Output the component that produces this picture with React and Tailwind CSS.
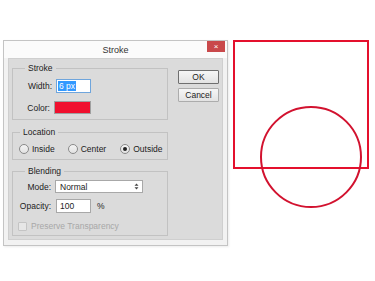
import React from "react";

function Radio({ label, checked, className = "" }) {
  return (
    <div className={`flex items-center gap-[3px] ${className}`}>
      <div className="w-[10px] h-[10px] rounded-full border border-[#8a8a8a] bg-gradient-to-b from-[#f4f4f4] to-[#e2e2e2] flex items-center justify-center">
        {checked && <div className="w-[4px] h-[4px] rounded-full bg-[#222]" />}
      </div>
      <span>{label}</span>
    </div>
  );
}

function Button({ children, primary }) {
  return (
    <button
      className={`w-[41px] h-[14px] text-[8.5px] leading-none rounded-[1px] border bg-gradient-to-b from-[#f6f6f6] to-[#e3e3e3] ${
        primary ? "border-[#6f6f6f]" : "border-[#acacac]"
      }`}
    >
      {children}
    </button>
  );
}

export default function App() {
  return (
    <div className="w-[375px] h-[281px] bg-white flex items-start pt-[40px] pl-[3px] font-['Liberation_Sans',Arial,sans-serif] text-[8.5px] leading-[10px] text-[#1c1c1c]">
      {/* Dialog */}
      <div className="w-[225px] h-[206px] border border-[#c4c4c4] bg-[#f2f2f2] flex flex-col shadow-[1px_1px_2px_rgba(0,0,0,0.08)]">
        {/* Title bar */}
        <div className="relative h-[17px] bg-[#fbfbfb] flex items-center justify-center">
          <span className="text-[9px] text-[#333]">Stroke</span>
          <div className="absolute right-[2px] top-0 w-[18px] h-[11px] bg-[#c9494b] flex items-center justify-center text-white text-[8px] leading-none">
            ×
          </div>
        </div>

        {/* Body */}
        <div className="flex-1 mx-[4px] mb-[5px] bg-[#dbdbdb] border border-[#cfcfcf] flex pl-[3px] pt-[3px]">
          {/* Left column */}
          <div className="w-[156px] flex flex-col">
            {/* Stroke */}
            <fieldset className="border border-[#c2c2c2] pb-[5px]">
              <legend className="ml-[12px] px-[3px] leading-[12px]">Stroke</legend>
              <div className="flex items-center mt-[5px]">
                <span className="w-[39px] text-right">Width:</span>
                <div className="ml-[4px] w-[35px] h-[14px] bg-white border border-[#6fa5dc] flex items-center pl-[1px]">
                  <span className="bg-[#3399ff] text-white px-[1px] leading-[10px]">6 px</span>
                </div>
              </div>
              <div className="flex items-center mt-[8px]">
                <span className="w-[37px] text-right">Color:</span>
                <div className="ml-[4px] w-[37px] h-[13px] bg-[#f0102e] border border-[#a0a0a0]" />
              </div>
            </fieldset>

            {/* Location */}
            <fieldset className="mt-[6px] border border-[#c2c2c2] pb-[5px]">
              <legend className="ml-[7px] px-[3px] leading-[12px]">Location</legend>
              <div className="flex items-center mt-[6px] pl-[6px]">
                <Radio label="Inside" />
                <Radio label="Center" className="ml-[13px]" />
                <Radio label="Outside" checked className="ml-[14px]" />
              </div>
            </fieldset>

            {/* Blending */}
            <fieldset className="mt-[5px] border border-[#c2c2c2] pb-[4px]">
              <legend className="ml-[12px] px-[3px] leading-[12px]">Blending</legend>
              <div className="flex items-center mt-[3px]">
                <span className="w-[38px] text-right">Mode:</span>
                <div className="ml-[4px] w-[88px] h-[13px] bg-white border border-[#a8a8a8] flex items-center justify-between pl-[4px] pr-[3px]">
                  <span>Normal</span>
                  <svg width="5" height="7" viewBox="0 0 5 7">
                    <path d="M2.5 0.5 L4.5 2.8 H0.5 Z M2.5 6.5 L4.5 4.2 H0.5 Z" fill="#444" />
                  </svg>
                </div>
              </div>
              <div className="flex items-center mt-[6px]">
                <span className="w-[38px] text-right">Opacity:</span>
                <div className="ml-[5px] w-[35px] h-[14px] bg-white border border-[#a8a8a8] flex items-center pl-[3px]">
                  100
                </div>
                <span className="ml-[6px]">%</span>
              </div>
              <div className="flex items-center mt-[8px] pl-[5px] text-[#a8a8a8]">
                <div className="w-[9px] h-[9px] rounded-[1px] border border-[#c4c4c4] bg-[#e6e6e6]" />
                <span className="ml-[4px]">Preserve Transparency</span>
              </div>
            </fieldset>
          </div>

          {/* Buttons */}
          <div className="ml-[10px] mt-[8px] flex flex-col gap-[4px]">
            <Button primary>OK</Button>
            <Button>Cancel</Button>
          </div>
        </div>
      </div>

      {/* Drawing */}
      <svg width="140" height="172" viewBox="0 0 140 172" className="ml-[4px]">
        <rect x="2" y="1" width="134" height="127" fill="none" stroke="#e4102d" strokeWidth="2" />
        <circle cx="79" cy="117" r="50" fill="none" stroke="#d2122f" strokeWidth="2" />
      </svg>
    </div>
  );
}
